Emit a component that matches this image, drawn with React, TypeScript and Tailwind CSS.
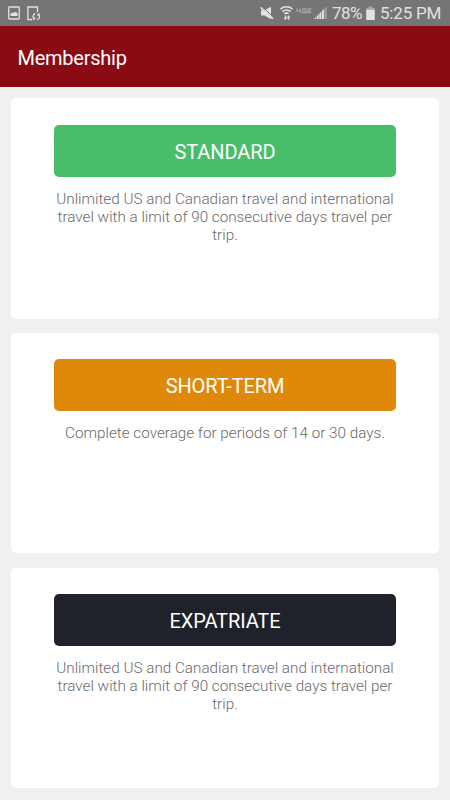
import React from 'react';
import { clsx } from 'clsx';

interface Plan {
  name: string;
  description: string;
  color: string;
}

const plans: Plan[] = [
  {
    name: 'STANDARD',
    description:
      'Unlimited US and Canadian travel and international travel with a limit of 90 consecutive days travel per trip.',
    color: 'bg-[#48bd6a]',
  },
  {
    name: 'SHORT-TERM',
    description: 'Complete coverage for periods of 14 or 30 days.',
    color: 'bg-[#df890a]',
  },
  {
    name: 'EXPATRIATE',
    description:
      'Unlimited US and Canadian travel and international travel with a limit of 90 consecutive days travel per trip.',
    color: 'bg-[#1f222a]',
  },
];

function StatusBar() {
  return (
    <div className="flex h-[26px] items-center bg-[#757575] pl-2 pr-[9px] text-[#e2e2e2]">
      {/* Notifications */}
      <svg className="h-[14px] w-[12px]" viewBox="0 0 12 14" fill="none">
        <rect x="0.75" y="1" width="10.5" height="12" rx="0.8" stroke="currentColor" strokeWidth="1.3" />
        <path d="M2.5 10V8l1.7-1.6 1.2.8L7 5.5l1 1.3.7-.5L9.6 8v2z" fill="currentColor" />
      </svg>
      <svg className="ml-[7px] h-[15px] w-[14px]" viewBox="0 0 14 15" fill="none" stroke="currentColor" strokeWidth="1.3">
        <path d="M5 13.5H.9V1h9.6v5" />
        <path d="M8.2 7.6A3 3 0 0 0 7.4 13M10.3 13.6a3 3 0 0 0 1-5.4" />
        <path d="M5.8 13.2h2v-2M12.9 7.9h-2v2" strokeWidth="1" />
      </svg>

      {/* System icons */}
      <svg className="ml-auto h-[14px] w-[15px]" viewBox="0 0 15 14">
        <path d="M1 4.3h3.6L11 .8v12.5L4.6 9.6H1z" fill="currentColor" />
        <path d="M2 .6l12 11" stroke="#757575" strokeWidth="1" />
        <path d="M.6 1.3l12.4 11.4" stroke="currentColor" strokeWidth="1.6" />
      </svg>
      <svg className="ml-[5px] h-[14px] w-[14px]" viewBox="0 0 14 14" fill="none" stroke="currentColor">
        <path d="M.5 3.1a9 9 0 0 1 12 0M2.5 5.6a5.7 5.7 0 0 1 8 0" strokeWidth="1.6" />
        <path d="M4.5 7.8a2.9 2.9 0 0 1 4 0" strokeWidth="1.6" />
        <path d="M4.8 9.5h1.4v2.2h1.2L5.5 14l-1.9-2.3h1.2zM7.9 13.7v-2.2H6.7l1.9-2.2 1.9 2.2H9.3v2.2z" fill="currentColor" stroke="none" />
      </svg>
      <svg className="ml-[2px] h-[14px] w-[16px] text-[#a8a8a8]" viewBox="0 0 16 14" fill="none" stroke="currentColor" strokeWidth="1.2">
        <path d="M1.1 2.3L.7 5h4.2M4.5 2.3l-.7 4.8M10.6 2.8H6.8l-.6 3.9h3.7l.3-1.9H8.3M15.5 2.8h-3.3l-.5 3.9h3.2M11.8 4.8h3.4" />
      </svg>
      <svg className="ml-[2px] h-[14px] w-[13px]" viewBox="0 0 13 14" fill="currentColor">
        <path d="M0 13l2.1-2.1V13zM2.7 10.3l2-2V13h-2zM5.3 7.7l2-2V13h-2z" />
        <path d="M7.9 5.1l2-2V13h-2z" />
        <path d="M10.5 2.5L12.8.3V13h-2.3z" opacity="0.4" />
      </svg>
      <span className="ml-[5px] w-[32px] whitespace-nowrap pt-px text-[17px] leading-[25px] tracking-[-0.6px]">78%</span>
      <svg className="ml-[2px] h-[14px] w-[9px]" viewBox="0 0 9 14">
        <path d="M2.7.5h3.6V2h2.3v2.5H.4V2h2.3z" fill="#a9a9a9" />
        <path d="M.2 3.8h8.6V14H.2z" fill="currentColor" />
      </svg>
      <span className="ml-[5px] w-[61px] whitespace-nowrap pt-px text-[17px] leading-[25px] tracking-[-0.2px]">5:25 PM</span>
    </div>
  );
}

function PlanCard({ plan }: { plan: Plan }) {
  return (
    <section className="h-[220.5px] rounded-[5px] bg-white px-[43px] pt-[26.5px] text-center">
      <button
        type="button"
        className={clsx(
          'h-[52px] w-full rounded-[5px] pt-[3px] text-[20px] leading-[49px] tracking-[-0.1px] text-white',
          plan.color
        )}
      >
        {plan.name}
      </button>
      <p className="mt-[13px] text-[15.25px] font-light leading-[18px] text-[#6a6a6a]">
        {plan.description}
      </p>
    </section>
  );
}

export default function App() {
  return (
    <div className="h-[800px] w-[450px] overflow-hidden bg-[#eff1f1] font-['Roboto','Liberation_Sans',sans-serif]">
      <StatusBar />
      <header className="flex h-[61px] items-center bg-[#8b0b14] px-[17.5px] pt-[2px]">
        <h1 className="text-[20px] tracking-[-0.25px] text-white">Membership</h1>
      </header>
      <main className="flex flex-col gap-[14.3px] px-[11px] pt-[11px]">
        {plans.map((plan) => (
          <PlanCard key={plan.name} plan={plan} />
        ))}
      </main>
    </div>
  );
}
